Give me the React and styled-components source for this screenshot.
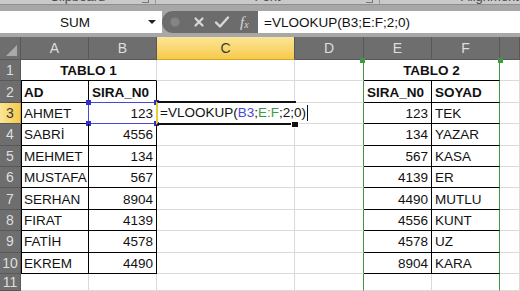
import React from 'react';
import styled, { createGlobalStyle } from 'styled-components';

const GlobalStyle = createGlobalStyle`
  html, body {
    margin: 0;
    padding: 0;
    overflow: hidden;
    background: #ffffff;
  }
  body {
    font-family: "Liberation Sans", Arial, sans-serif;
  }
`;

const GRID = '#dadada';
const INK = '#000000';
const GREEN = '#3f9a3f';
const BLUE = '#4848d8';

const leftTable = [
  ['AHMET', '123'],
  ['SABRİ', '4556'],
  ['MEHMET', '134'],
  ['MUSTAFA', '567'],
  ['SERHAN', '8904'],
  ['FIRAT', '4139'],
  ['FATİH', '4578'],
  ['EKREM', '4490'],
];
const rightTable = [
  ['123', 'TEK'],
  ['134', 'YAZAR'],
  ['567', 'KASA'],
  ['4139', 'ER'],
  ['4490', 'MUTLU'],
  ['4556', 'KUNT'],
  ['4578', 'UZ'],
  ['8904', 'KARA'],
];

function App() {
  const rows = [];

  // row 1 - titles
  rows.push(
    <React.Fragment key="r1">
      <RowHead>1</RowHead>
      <Cell $span={2} $align="center" $bold $bc={INK}>TABLO 1</Cell>
      <Cell />
      <Cell $rc={GREEN} />
      <Cell $span={2} $align="center" $bold $bc={INK} $rc={GREEN}>
        TABLO 2
        <Handle $side="left" />
        <Handle $side="right" />
      </Cell>
      <Cell />
    </React.Fragment>
  );

  // row 2 - table headers
  rows.push(
    <React.Fragment key="r2">
      <RowHead>2</RowHead>
      <Cell $bold $edge $rc={INK} $bc={INK}>AD</Cell>
      <Cell $bold $rc={INK} $bc={INK}>SIRA_N0</Cell>
      <Cell />
      <Cell $rc={GREEN} />
      <Cell $bold $rc={INK} $bc={INK}>SIRA_N0</Cell>
      <Cell $bold $rc={GREEN} $bc={INK}>SOYAD</Cell>
      <Cell />
    </React.Fragment>
  );

  leftTable.forEach((l, i) => {
    const r = rightTable[i];
    const n = i + 3;
    const active = n === 3;
    rows.push(
      <React.Fragment key={n}>
        <RowHead $on={active}>{n}</RowHead>
        <Cell $edge $rc={INK} $bc={INK}>{l[0]}</Cell>
        <Cell $align="right" $rc={INK} $bc={INK}>
          {l[1]}
          {active && (
            <RefBox>
              <Corner $x="left" $y="top" />
              <Corner $x="right" $y="top" />
              <Corner $x="left" $y="bottom" />
              <Corner $x="right" $y="bottom" />
            </RefBox>
          )}
        </Cell>
        <Cell>
          {active && (
            <>
              <ActiveBox>
                <FillHandle />
              </ActiveBox>
              <Editor>
                =VLOOKUP(<RefText $c={BLUE}>B3</RefText>;<RefText $c={GREEN}>E:F</RefText>;2;0)
                <Caret />
              </Editor>
            </>
          )}
        </Cell>
        <Cell $rc={GREEN} />
        <Cell $align="right" $rc={INK} $bc={INK}>{r[0]}</Cell>
        <Cell $rc={GREEN} $bc={INK}>{r[1]}</Cell>
        <Cell />
      </React.Fragment>
    );
  });

  rows.push(
    <React.Fragment key="r11">
      <RowHead>11</RowHead>
      <Cell />
      <Cell />
      <Cell />
      <Cell $rc={GREEN} />
      <Cell />
      <Cell $rc={GREEN} />
      <Cell />
    </React.Fragment>
  );

  return (
    <>
      <GlobalStyle />
      <Page>
        <Ribbon>
          <Group $w={155}>
            <GroupLabel>Clipboard</GroupLabel>
            <Launcher />
          </Group>
          <Group $w={223}>
            <GroupLabel>Font</GroupLabel>
            <Launcher />
          </Group>
          <Group $w={220}>
            <GroupLabel>Alignment</GroupLabel>
          </Group>
        </Ribbon>

        <FormulaBar>
          <NameBox>
            <NameText>SUM</NameText>
            <DropArrow />
          </NameBox>
          <Tools>
            <Grip />
            <ToolIcon viewBox="0 0 12 12" width="12" height="12">
              <path d="M2.5 2.5 L9.5 9.5 M9.5 2.5 L2.5 9.5" stroke="#d8d8d8" strokeWidth="2.2" strokeLinecap="round" />
            </ToolIcon>
            <ToolIcon viewBox="0 0 16 14" width="16" height="14">
              <path d="M2 7.5 L6 11.5 L14 2.5" stroke="#d8d8d8" strokeWidth="2.4" fill="none" strokeLinecap="round" strokeLinejoin="round" />
            </ToolIcon>
            <FxMark>
              f<sub>x</sub>
            </FxMark>
          </Tools>
          <FormulaInput>=VLOOKUP(B3;E:F;2;0)</FormulaInput>
        </FormulaBar>

        <Sheet>
          <SelectAll>
            <svg width="11" height="11" viewBox="0 0 11 11">
              <polygon points="11,0 11,11 0,11" fill="#a9a9a9" />
            </svg>
          </SelectAll>
          {['A', 'B', 'C', 'D', 'E', 'F', ''].map((c) => (
            <ColHead key={c || 'G'} $on={c === 'C'}>{c}</ColHead>
          ))}
          {rows}
        </Sheet>
      </Page>
    </>
  );
}

const Page = styled.div`
  width: 520px;
  height: 291px;
  overflow: hidden;
  display: flex;
  flex-direction: column;
  background: #a7a7a7;
`;

/* ribbon strip, mostly cropped away */
const Ribbon = styled.div`
  height: 4px;
  display: flex;
  background: #c9c9c9;
  border-bottom: 1px solid #8f8f8f;
  overflow: hidden;
`;
const Group = styled.div`
  position: relative;
  flex: 0 0 ${(p) => p.$w}px;
  display: flex;
  justify-content: center;
  border-right: 1px solid #9a9a9a;
`;
const GroupLabel = styled.span`
  font-size: 13px;
  line-height: 13px;
  margin-top: -10px;
  color: #4a4a4a;
`;
const Launcher = styled.span`
  position: absolute;
  right: 6px;
  top: -4px;
  width: 6px;
  height: 6px;
  border-right: 1px solid #777;
  border-bottom: 1px solid #777;
`;

const FormulaBar = styled.div`
  height: 22px;
  padding: 6px 0 4px;
  display: flex;
  align-items: stretch;
  background: #a7a7a7;
`;
const NameBox = styled.div`
  width: 162px;
  display: flex;
  align-items: center;
  background: #fff;
`;
const NameText = styled.span`
  flex: 1;
  text-align: center;
  font-size: 13.5px;
  color: #111;
  padding-left: 2px;
`;
const DropArrow = styled.span`
  width: 0;
  height: 0;
  margin-right: 6px;
  border-left: 4px solid transparent;
  border-right: 4px solid transparent;
  border-top: 4px solid #222;
`;
const Tools = styled.div`
  width: 96px;
  display: flex;
  align-items: center;
  gap: 9px;
  padding-left: 8px;
  box-sizing: border-box;
  background: #6c6c6c;
  border-radius: 11px 0 0 11px;
`;
const Grip = styled.span`
  width: 10px;
  height: 10px;
  border-radius: 50%;
  background: #858585;
  box-shadow: inset 0 0 0 1px #767676;
  margin-right: 4px;
`;
const ToolIcon = styled.svg`
  display: block;
`;
const FxMark = styled.span`
  font-family: "Liberation Serif", "Times New Roman", serif;
  font-style: italic;
  font-size: 15px;
  color: #d8d8d8;
  margin-left: 1px;

  sub {
    font-size: 10px;
    vertical-align: -1px;
  }
`;
const FormulaInput = styled.div`
  flex: 1;
  display: flex;
  align-items: center;
  padding-left: 6px;
  background: #fff;
  font-size: 13.5px;
  color: #111;
  white-space: nowrap;
`;

const Sheet = styled.div`
  flex: 1;
  display: grid;
  grid-template-columns: 21px 68px 68px 138px 69px 68px 68px 1fr;
  grid-template-rows: 23px repeat(10, 21.4px) 1fr;
  background: #fff;
  font-size: 13.5px;
  color: #111;
`;
const SelectAll = styled.div`
  display: flex;
  align-items: flex-end;
  justify-content: flex-end;
  padding: 0 3px 3px 0;
  background: #6e6e6e;
  border-right: 1px solid #585858;
  border-bottom: 1px solid #585858;
`;
const ColHead = styled.div`
  display: flex;
  align-items: center;
  justify-content: center;
  font-size: 14px;
  color: ${(p) => (p.$on ? '#3a3a3a' : '#dedede')};
  background: ${(p) => (p.$on ? 'linear-gradient(#fbe596, #f6cb4c)' : '#6e6e6e')};
  border-right: 1px solid #585858;
  border-bottom: 1px solid ${(p) => (p.$on ? '#d8a424' : '#585858')};
`;
const RowHead = styled.div`
  display: flex;
  align-items: center;
  justify-content: center;
  font-size: 14px;
  color: ${(p) => (p.$on ? '#3a3a3a' : '#dedede')};
  background: ${(p) => (p.$on ? 'linear-gradient(90deg, #fbe596, #f6cb4c)' : '#6e6e6e')};
  border-right: 1px solid ${(p) => (p.$on ? '#d8a424' : '#585858')};
  border-bottom: 1px solid #585858;
`;
const Cell = styled.div`
  position: relative;
  grid-column: span ${(p) => p.$span || 1};
  display: flex;
  align-items: center;
  justify-content: ${(p) =>
    p.$align === 'right' ? 'flex-end' : p.$align === 'center' ? 'center' : 'flex-start'};
  padding: 1px 3px 0;
  font-weight: ${(p) => (p.$bold ? 700 : 400)};
  white-space: nowrap;
  border-right: 1px solid ${(p) => p.$rc || GRID};
  border-bottom: 1px solid ${(p) => p.$bc || GRID};
  box-shadow: ${(p) => (p.$edge ? `inset 1px 0 0 ${INK}` : 'none')};
`;

/* green handles of the E:F reference range */
const Handle = styled.span`
  position: absolute;
  top: -2px;
  ${(p) => (p.$side === 'left' ? 'left: -4px;' : 'right: -4px;')}
  width: 5px;
  height: 5px;
  background: ${GREEN};
`;

/* blue frame around B3 */
const RefBox = styled.span`
  position: absolute;
  inset: -1px -1px -1px -1px;
  border: 1px solid ${BLUE};
  pointer-events: none;
`;
const Corner = styled.span`
  position: absolute;
  width: 5px;
  height: 5px;
  background: #2f2fd0;
  ${(p) => (p.$x === 'left' ? 'left: -3px;' : 'right: -3px;')}
  ${(p) => (p.$y === 'top' ? 'top: -3px;' : 'bottom: -3px;')}
`;

/* active cell C3 in edit mode */
const ActiveBox = styled.span`
  position: absolute;
  top: -2px;
  bottom: -2px;
  left: -1px;
  right: -2px;
  border-top: 2px solid #111;
  border-bottom: 2px solid #111;
  border-left: 2px solid #e3cf3a;
  z-index: 2;
`;
const FillHandle = styled.span`
  position: absolute;
  right: -2px;
  bottom: -4px;
  width: 6px;
  height: 5px;
  background: #111;
  box-shadow: 0 0 0 1px #fff;
`;
const Editor = styled.span`
  position: absolute;
  left: 1px;
  top: 0;
  bottom: 1px;
  z-index: 3;
  display: flex;
  align-items: center;
  padding: 1px 2px 0 2px;
  background: #fff;
  color: #111;
  white-space: nowrap;
`;
const RefText = styled.span`
  color: ${(p) => p.$c};
`;
const Caret = styled.span`
  display: inline-block;
  width: 1px;
  height: 16px;
  margin-left: 1px;
  background: #111;
`;

export default App;
